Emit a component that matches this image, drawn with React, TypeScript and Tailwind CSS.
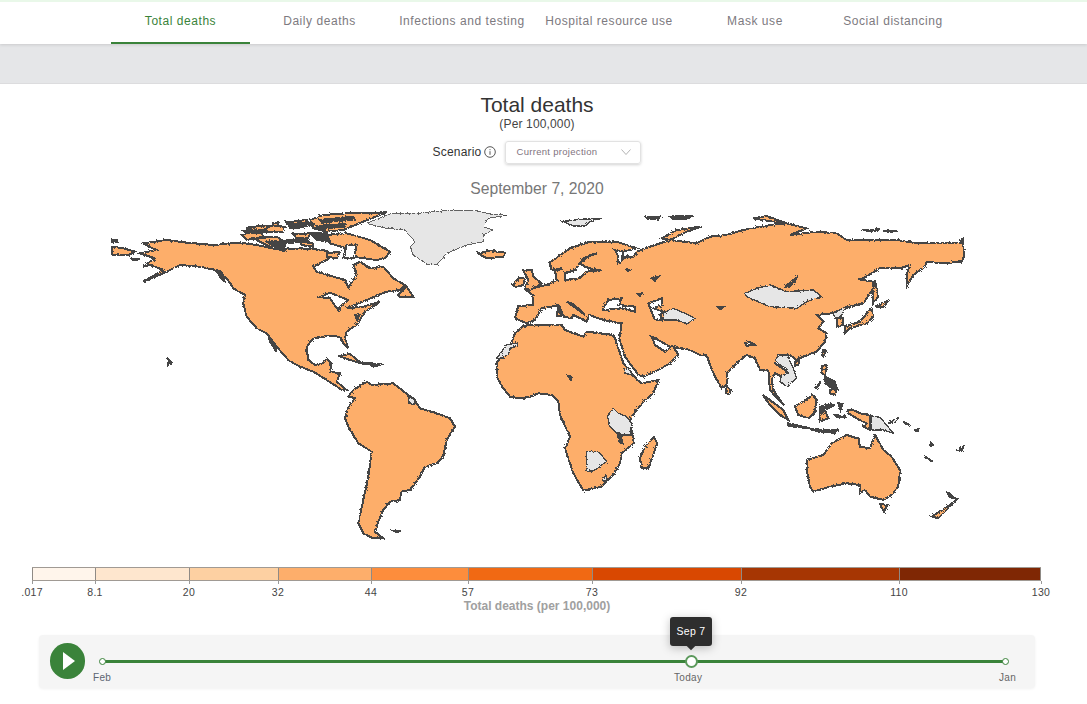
const tabs = [
  { label: "Total deaths", width: "w-[139px]", active: true },
  { label: "Daily deaths", width: "w-[139px]" },
  { label: "Infections and testing", width: "w-[146px]" },
  { label: "Hospital resource use", width: "w-[148px]" },
  { label: "Mask use", width: "w-[144px]" },
  { label: "Social distancing", width: "w-[132px]" },
];

const legend = [
  { label: ".017", width: 63, color: "#fff5eb" },
  { label: "8.1", width: 94, color: "#fee6ce" },
  { label: "20", width: 89, color: "#fdd0a2" },
  { label: "32", width: 93, color: "#fdae6b" },
  { label: "44", width: 97, color: "#fd8d3c" },
  { label: "57", width: 124, color: "#f16913" },
  { label: "73", width: 149, color: "#d94801" },
  { label: "92", width: 158, color: "#a63603" },
  { label: "110", width: 142, color: "#7f2704" },
];

// coordinates are 3x page pixels, west group starts at (100,200), east at (530,200)
const westLand = [
  "130,130 200,120 260,128 340,135 420,128 470,135 540,150 600,145 670,150 700,165 690,175 640,200 650,215 700,230 735,240 745,262 770,225 760,195 780,185 810,205 850,200 880,235 915,255 900,270 860,275 800,300 740,325 790,320 840,305 790,340 775,370 740,395 735,415 745,445 730,430 720,410 680,408 640,415 620,440 625,480 645,495 670,490 680,475 695,490 690,515 720,520 710,545 740,570 725,570 680,540 640,515 600,500 565,480 530,440 500,400 470,385 440,350 430,310 435,285 400,265 380,235 345,210 300,200 240,195 200,215 130,245 190,210 150,195 130,200 165,175 120,160 170,150",
  "745,590 760,570 800,545 815,555 880,550 925,585 950,610 960,625 1010,640 1050,655 1065,680 1040,720 1030,770 1010,790 975,800 960,830 930,870 905,875 900,900 870,905 850,930 835,965 825,995 850,1015 820,1015 790,1000 775,970 790,900 805,830 815,755 775,730 745,680 735,655 745,620 765,595",
  "425,105 450,97 485,100 490,110 440,120",
  "460,115 530,110 560,130 510,140",
  "440,83 490,77 555,80 550,95 475,95",
  "520,70 535,67 533,77 520,77",
  "560,67 620,60 630,75 590,85 570,83",
  "630,60 670,45 740,40 860,37 790,65 730,90 680,95 640,85",
  "580,103 630,100 625,115 590,115",
  "675,105 740,100 810,120 870,155 855,175 830,180 760,170 740,145 690,130",
  "680,160 720,155 710,175 680,170",
  "600,125 640,130 640,140 605,135",
  "35,140 70,145 105,155 85,165 35,165",
  "1135,160 1170,152 1215,158 1210,170 1160,175",
  "895,285 920,260 940,290 900,290",
  "715,468 750,462 785,490 815,490 790,492 750,480",
  "800,490 850,492 820,500",
];
const westDark = [
  "35,120 50,120 50,125 35,125",
  "92,175 120,178 100,180",
  "205,478 215,488 205,495",
  "882,993 903,992 890,997",
  "660,60 760,50 765,58 665,68",
  "650,78 735,72 730,80 655,88",
  "565,72 640,68 640,75 570,80",
  "430,92 500,88 500,94 440,98",
  "500,125 620,118 625,125 510,132",
  "530,140 555,138 550,150",
  "630,100 680,98 690,125 650,120",
  "350,210 365,215 375,245 360,230",
  "765,345 778,345 772,360",
];
const westSea = [
  "660,292 690,278 720,290 745,300 720,320 715,330 700,310 690,295",
  "505,405 525,440 530,455 510,425",
  "740,135 770,135 762,175 730,175",
];

const eastLand = [
  "-45,355 -35,318 10,315 8,285 -12,270 55,253 80,240 75,215 95,205 65,210 58,188 120,145 180,125 260,125 320,145 280,155 255,150 275,170 310,170 320,155 360,140 420,120 500,130 540,110 590,105 640,90 720,75 770,70 830,85 780,105 860,95 920,100 950,120 1100,120 1160,130 1300,130 1302,170 1295,185 1240,190 1190,185 1185,200 1150,225 1130,260 1130,225 1140,195 1110,205 1050,205 1000,235 985,238 1030,245 1030,265 1000,310 960,320 905,340 860,345 880,365 865,385 890,400 885,425 860,455 820,470 800,480 780,465 745,465 735,490 765,510 775,525 765,535 735,520 725,535 730,570 750,600 762,615 745,600 720,570 715,510 690,510 675,475 650,465 620,490 590,520 590,555 575,565 555,530 540,495 530,465 510,465 480,450 430,440 445,465 420,490 385,510 340,530 325,525 285,470 268,415 275,370 220,360 178,345 170,365 130,345 125,355 102,350 85,315 75,318 35,325 15,360 -10,370",
  "-20,378 0,375 95,375 105,390 160,410 170,395 250,405 255,415 280,490 322,540 335,550 385,540 370,580 340,605 305,650 300,665 312,730 275,760 270,790 250,825 215,860 160,872 130,820 105,745 120,710 90,645 85,605 65,585 25,580 0,590 -30,595 -60,590 -80,565 -100,530 -100,490 -85,465 -60,440 -45,400",
  "372,712 382,730 355,805 335,805 330,775 345,740",
  "-20,210 5,210 10,230 35,250 0,270 -15,265 -5,240",
  "-50,255 -35,235 -15,235 -20,255 -45,262",
  "85,320 92,348 80,348",
  "395,115 440,90 515,80 470,95 420,120",
  "670,55 710,48 770,70 730,65",
  "995,90 1050,88 1025,95",
  "1035,240 1045,290 1030,310 1030,270",
  "1035,320 1078,300 1060,320",
  "1025,325 1030,350 1010,370 960,385 945,400 945,380 990,365 1015,335",
  "880,450 888,452 880,470 875,465",
  "590,560 602,570 598,582 588,580",
  "795,485 808,480 805,495 795,497",
  "920,355 940,355 940,375 920,380",
  "698,585 720,600 760,630 775,660 750,645 720,615",
  "775,670 840,685 810,682 775,678",
  "795,620 850,585 860,600 855,635 835,655 805,645",
  "870,620 915,615 885,630 895,655 870,665 870,635",
  "875,498 890,495 885,525 875,520",
  "900,570 920,565 915,585 900,580",
  "955,630 975,632 990,640 1020,645 1020,690 1000,680 1010,670 980,655 955,640",
  "830,780 880,765 905,730 950,705 985,715 990,740 1020,745 1035,705 1060,750 1085,770 1110,810 1105,860 1085,885 1060,900 1020,890 1005,870 990,880 990,855 950,850 900,860 850,875 840,860 830,810",
  "1050,912 1072,915 1062,935",
  "1205,950 1260,915 1285,895 1255,925 1225,955",
];
const eastGray = [
  "-100,475 -70,435 -38,428 -38,438 -60,445 -65,465 -90,475",
  "232,650 250,625 265,640 290,650 305,670 300,705 265,705 240,680",
  "170,755 205,755 230,785 195,810 170,815",
  "215,835 228,828 232,838 222,845",
  "282,505 300,505 305,525 285,520",
  "645,280 680,265 720,255 770,275 850,270 875,290 830,305 800,325 720,320 695,310 650,290",
  "400,340 430,325 465,340 495,355 470,372 440,360 400,360",
  "735,480 750,465 775,465 780,485 790,505 800,535 770,560 750,545 755,525 775,520 770,505 750,495",
  "910,340 950,320 930,350 915,355",
  "1025,648 1050,652 1070,675 1090,700 1060,690 1025,690",
  "1075,670 1105,652 1095,668",
  "100,65 150,58 215,55 180,65 165,78 130,78",
];
const eastDark = [
  "262,700 270,700 278,730 268,725",
  "350,52 390,52 385,57 355,57",
  "420,50 490,48 470,56 430,57",
  "1060,92 1100,92 1080,96",
  "1290,120 1300,115 1300,125",
  "365,235 385,230 375,242",
  "290,208 300,210 295,214",
  "325,282 335,280 330,287",
  "115,528 124,530 122,538",
  "565,322 578,322 570,327",
  "765,260 800,232 795,245 775,262",
  "855,565 872,545 862,562",
  "885,530 915,545 920,565 900,560 885,550",
  "870,620 900,612 885,630 875,640",
  "925,610 938,612 932,630",
  "915,645 950,650 920,652",
  "840,688 925,690 880,698",
  "900,695 925,688 910,700",
  "1120,665 1138,675 1125,670",
  "1155,690 1165,688 1160,694",
  "1185,770 1208,785 1190,775",
  "1285,750 1300,740 1295,752",
  "1250,875 1275,895 1262,895",
  "1203,730 1208,735 1204,737",
];
const eastSea = [
  "220,325 235,300 275,295 265,315 315,320 315,335 275,325 220,330",
  "355,310 395,295 395,315 370,325 400,335 390,345 400,360 375,360",
  "110,305 130,312 165,345 145,330",
  "365,410 385,420 420,440 405,455 375,435",
  "105,240 150,235 170,215 215,210 190,208 165,200 150,190 180,165 202,160 160,175 135,210 105,220",
  "255,150 280,155 275,178 295,165 265,190 265,170",
  "645,430 660,425 675,435 650,437",
];

function WorldMap() {
  return (
    <svg viewBox="100 200 880 350" width={880} height={350} className="ml-[100px] block">
      <defs>
        <filter id="rough" filterUnits="userSpaceOnUse" x="100" y="200" width="880" height="350">
          <feTurbulence type="fractalNoise" baseFrequency="0.55" numOctaves="2" seed="4" />
          <feDisplacementMap in="SourceGraphic" scale="3" />
        </filter>
      </defs>
      <g filter="url(#rough)" stroke="#444" strokeLinejoin="miter" shapeRendering="crispEdges">
        <g transform="translate(100 200) scale(0.3333)" strokeWidth="6">
          <polygon
            points="800,70 870,42 930,42 1060,30 1130,32 1170,42 1220,46 1165,55 1150,80 1180,90 1150,105 1150,125 1100,135 1040,160 1010,195 985,195 940,165 930,140 945,125 915,90 860,85"
            fill="#e6e6e6"
            strokeWidth="2.5"
          />
          {westLand.map((p) => <polygon key={p} points={p} fill="#fdae6b" />)}
          {westDark.map((p) => <polygon key={p} points={p} fill="#444" />)}
          {westSea.map((p) => <polygon key={p} points={p} fill="#fff" />)}
          <polygon points="925,585 945,600 945,612 928,610" fill="#e6e6e6" />
        </g>
        <g transform="translate(530 200) scale(0.3333)" strokeWidth="6">
          {eastLand.map((p) => <polygon key={p} points={p} fill="#fdae6b" />)}
          {eastSea.map((p) => <polygon key={p} points={p} fill="#fff" />)}
          {eastGray.map((p) => <polygon key={p} points={p} fill="#e6e6e6" strokeWidth="4" />)}
          {eastDark.map((p) => <polygon key={p} points={p} fill="#444" />)}
        </g>
      </g>
    </svg>
  );
}

export default function App() {
  return (
    <div className="h-[704px] w-[1087px] overflow-hidden bg-white font-['Liberation_Sans',Arial,sans-serif]">
      {/* Tabs */}
      <nav className="relative z-10 flex h-[44px] border-t-2 border-[#e9f8e9] bg-white pl-[111px] shadow-[0_1px_3px_rgba(0,0,0,0.12)]">
        {tabs.map((tab) => (
          <div
            key={tab.label}
            className={`flex h-[42px] items-center justify-center whitespace-nowrap border-b-2 pb-[2px] text-[12px] tracking-[0.55px] ${tab.width} ${
              tab.active ? "border-[#3a833a] text-[#3a833a]" : "border-transparent text-[#7d7a80]"
            }`}
          >
            {tab.label}
          </div>
        ))}
      </nav>
      <div className="h-[40px] border-b border-[#dcdcde] bg-[#e5e6e8]" />

      {/* Title and scenario */}
      <div className="flex w-[1074px] flex-col items-center">
        <h1 className="mt-[9px] text-[21px] leading-[23px] text-[#333]">Total deaths</h1>
        <p className="text-[12px] leading-[16px] tracking-[0.15px] text-[#444]">(Per 100,000)</p>
        <div className="mt-[8px] flex h-[24px] items-center">
          <span className="text-[12px] tracking-[0.2px] text-[#333]">Scenario</span>
          <svg viewBox="0 0 12 12" className="ml-[3px] h-[12px] w-[12px]" fill="none" stroke="#444" strokeWidth="0.9">
            <circle cx="6" cy="6" r="5.3" />
            <path d="M6 5.2v3.6M6 3.2v1" />
          </svg>
          <div className="ml-[9px] flex h-[23px] w-[136px] items-center justify-between rounded-[3px] border border-[#e2e2e2] pl-[10px] pr-[9px] shadow-[0_1px_3px_rgba(0,0,0,0.18)]">
            <span className="text-[9.5px] tracking-[0.3px] text-[#7f7380]">Current projection</span>
            <svg viewBox="0 0 10 6" className="h-[6px] w-[10px]" fill="none" stroke="#aaa" strokeWidth="0.9">
              <path d="M0.5 0.5 5 5.5 9.5 0.5" />
            </svg>
          </div>
        </div>
        <p className="mb-[1px] mt-[15px] text-[15.7px] leading-[20px] text-[#777]">September 7, 2020</p>
      </div>

      <WorldMap />

      {/* Legend */}
      <div className="ml-[32px] mt-[17px] w-[1009px]">
        <div className="flex h-[14px] border-y border-[#a09a94]">
          {legend.map((item) => (
            <div
              key={item.label}
              className="border-l border-[#8f8a85] last:border-r"
              style={{ width: item.width, backgroundColor: item.color }}
            />
          ))}
        </div>
        <div className="flex">
          {legend.map((item) => (
            <div key={item.label} style={{ width: item.width }}>
              <div className="h-[3px] w-px bg-[#999]" />
              <div className="flex w-0 justify-center pt-[2px] text-[10.5px] leading-[13px] tracking-[0.3px] text-[#444]">{item.label}</div>
            </div>
          ))}
          <div className="w-0">
            <div className="h-[3px] w-px bg-[#999]" />
            <div className="flex w-0 justify-center pt-[2px] text-[10.5px] leading-[13px] tracking-[0.3px] text-[#444]">130</div>
          </div>
        </div>
      </div>
      <p className="w-[1074px] text-center text-[12px] font-bold leading-[14px] text-[#a0a0a0]">Total deaths (per 100,000)</p>

      {/* Timeline */}
      <div className="ml-[39px] mt-[22px] flex h-[53px] w-[996px] rounded-[4px] bg-[#f5f5f5] pl-[11px] shadow-[0_1px_3px_rgba(0,0,0,0.06)]">
        <button className="mt-[8px] flex h-[36px] w-[35px] items-center justify-center rounded-full bg-[#3a833a]">
          <svg viewBox="0 0 12 18" className="ml-[2px] h-[18px] w-[12px]" fill="#fff">
            <path d="M0 0 12 9 0 18z" />
          </svg>
        </button>
        <div className="relative ml-[17px] mt-[25px] h-[3px] w-[904px] bg-[#3a833a]">
          <span className="absolute left-[-3px] top-[-2px] h-[7px] w-[7px] rounded-full border border-[#3a833a] bg-white" />
          <span className="absolute right-[-3px] top-[-2px] h-[7px] w-[7px] rounded-full border border-[#3a833a] bg-white" />
          <span className="absolute left-[583px] top-[-5px] h-[13px] w-[13px] rounded-full border-2 border-[#5c9a5c] bg-white" />
          <span className="absolute left-[-9px] top-[10px] text-[10px] tracking-[0.3px] text-[#5b6470]">Feb</span>
          <span className="absolute left-[572px] top-[10px] text-[10px] tracking-[0.3px] text-[#666]">Today</span>
          <span className="absolute right-[-10px] top-[10px] text-[10px] tracking-[0.3px] text-[#666]">Jan</span>
          <div className="absolute left-[568px] top-[-43px] flex h-[29px] w-[42px] items-center justify-center rounded-[3px] bg-[#2e2e2e] text-[10.5px] tracking-[0.3px] text-white shadow-[0_2px_10px_rgba(0,0,0,0.25)]">
            Sep 7
            <span className="absolute bottom-[-3px] left-[18px] h-[6px] w-[6px] rotate-45 bg-[#2e2e2e]" />
          </div>
        </div>
      </div>
    </div>
  );
}
